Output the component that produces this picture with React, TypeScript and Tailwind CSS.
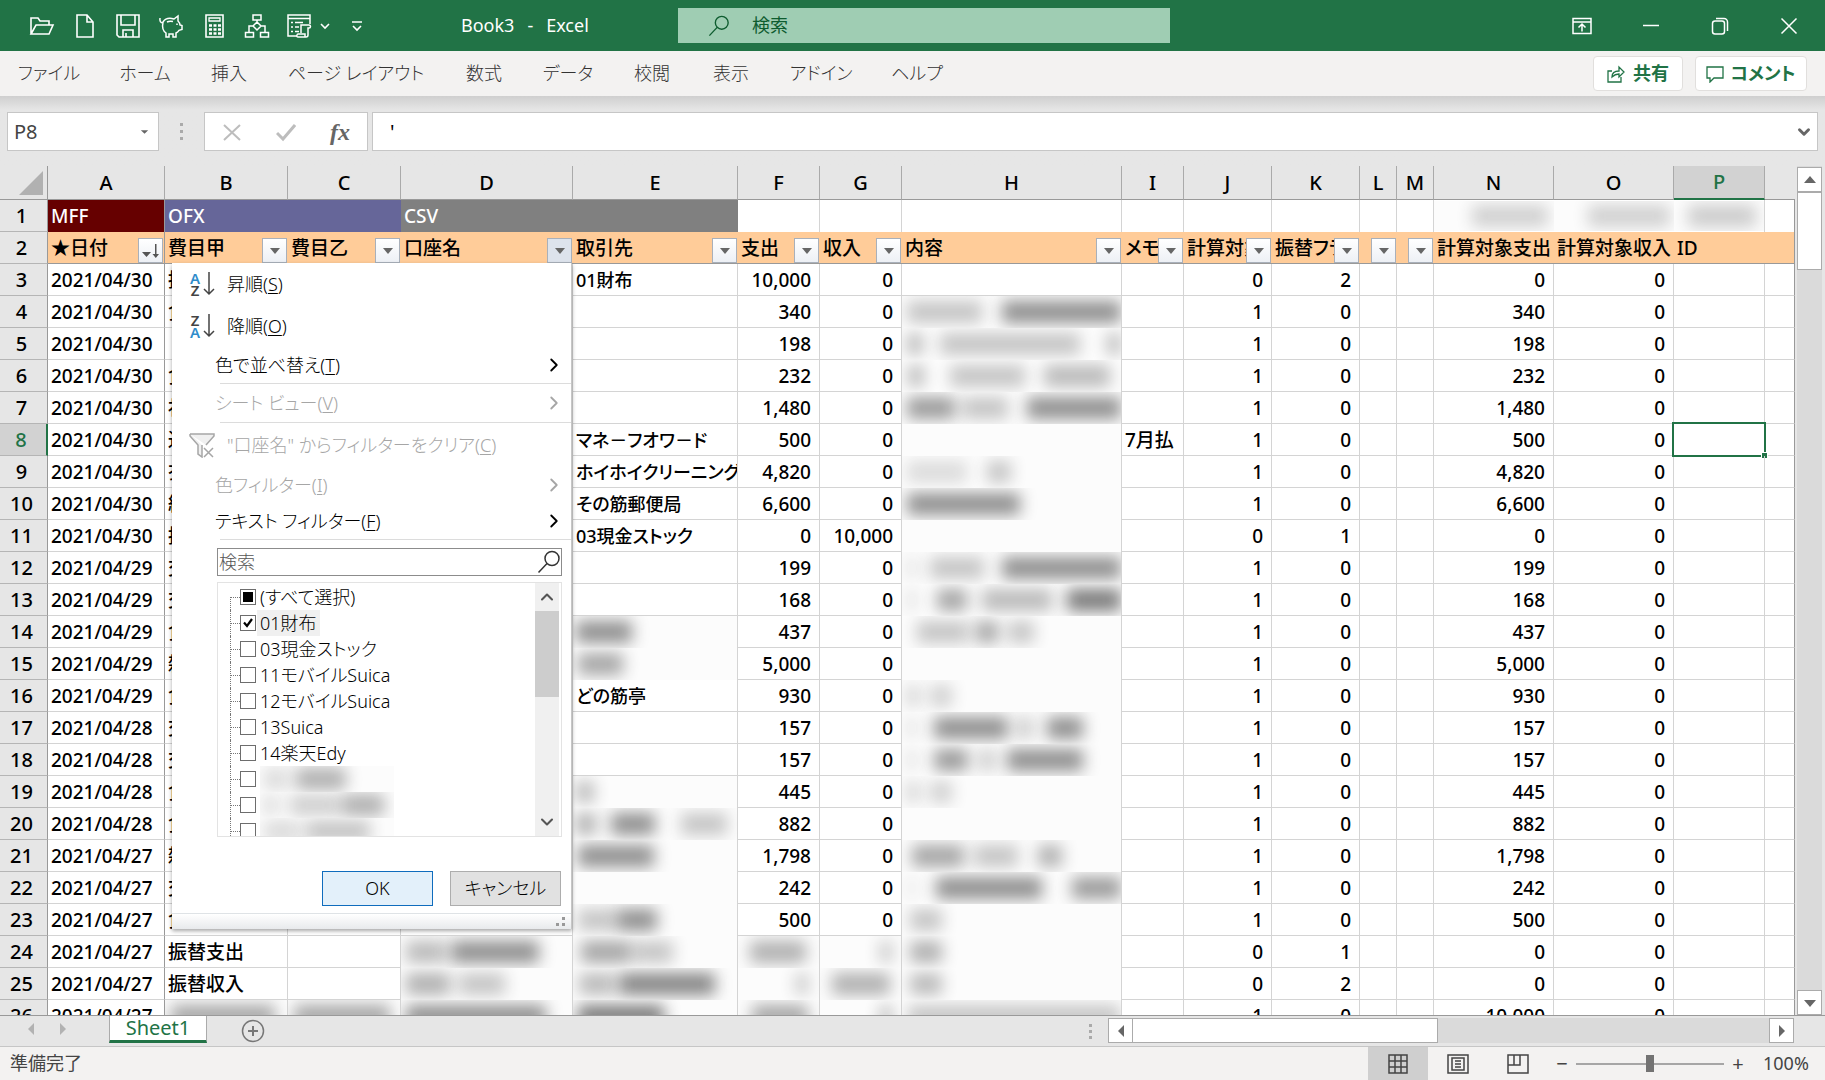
import React from 'react';
import { ChevronDown, ChevronRight, ChevronUp } from 'lucide-react';

type Bar = [start: number, width: number, alpha: number];
type Cell = string | Bar[];

const tabs = [
  { label: 'ファイル', width: 'w-[98px]' },
  { label: 'ホーム', width: 'w-[94px]' },
  { label: '挿入', width: 'w-[74px]' },
  { label: 'ページ レイアウト', width: 'w-[180px]' },
  { label: '数式', width: 'w-[76px]' },
  { label: 'データ', width: 'w-[92px]' },
  { label: '校閲', width: 'w-[76px]' },
  { label: '表示', width: 'w-[82px]' },
  { label: 'アドイン', width: 'w-[98px]' },
  { label: 'ヘルプ', width: 'w-[94px]' },
];

const columns = [
  { id: 'A', width: 'w-[117px]', title: '★日付', filter: true },
  { id: 'B', width: 'w-[123px]', title: '費目甲', filter: true },
  { id: 'C', width: 'w-[113px]', title: '費目乙', filter: true },
  { id: 'D', width: 'w-[172px]', title: '口座名', filter: true },
  { id: 'E', width: 'w-[165px]', title: '取引先', filter: true },
  { id: 'F', width: 'w-[82px]', title: '支出', filter: true },
  { id: 'G', width: 'w-[82px]', title: '収入', filter: true },
  { id: 'H', width: 'w-[220px]', title: '内容', filter: true },
  { id: 'I', width: 'w-[62px]', title: 'メモ', filter: true },
  { id: 'J', width: 'w-[88px]', title: '計算対象', filter: true },
  { id: 'K', width: 'w-[88px]', title: '振替フラグ', filter: true },
  { id: 'L', width: 'w-[37px]', title: '', filter: true },
  { id: 'M', width: 'w-[37px]', title: '', filter: true },
  { id: 'N', width: 'w-[120px]', title: '計算対象支出', filter: false },
  { id: 'O', width: 'w-[120px]', title: '計算対象収入', filter: false },
  { id: 'P', width: 'w-[91px]', title: 'ID', filter: false },
];

// date, B, C, D, E, F, G, H, I, J, K, N, O
const rows: Cell[][] = [
  ['2021/04/30', '振替収入', '', '', '01財布', '10,000', '0', '', '', '0', '2', '0', '0'],
  ['2021/04/30', '食費', '', '', '', '340', '0', [[5, 75, 0.25], [100, 119, 0.5]], '', '1', '0', '340', '0'],
  ['2021/04/30', '', '', '', '', '198', '0', [[5, 16, 0.3], [38, 140, 0.25], [205, 14, 0.3]], '', '1', '0', '198', '0'],
  ['2021/04/30', '食費', '', '', '', '232', '0', [[6, 16, 0.3], [48, 75, 0.25], [142, 66, 0.3]], '', '1', '0', '232', '0'],
  ['2021/04/30', '社会費', '', '', '', '1,480', '0', [[5, 48, 0.45], [60, 46, 0.25], [125, 94, 0.5]], '', '1', '0', '1,480', '0'],
  ['2021/04/30', '通信費', '', '', 'マネ－フオワ－ド', '500', '0', [], '7月払', '1', '0', '500', '0'],
  ['2021/04/30', '衣服費', '', '', 'ホイホイクリーニング', '4,820', '0', [[5, 60, 0.15], [85, 24, 0.25]], '', '1', '0', '4,820', '0'],
  ['2021/04/30', '経費', '', '', 'その筋郵便局', '6,600', '0', [[5, 113, 0.5]], '', '1', '0', '6,600', '0'],
  ['2021/04/30', '振替支出', '', '', '03現金ストック', '0', '10,000', [], '', '0', '1', '0', '0'],
  ['2021/04/29', '交通費', '', '', '', '199', '0', [[6, 8, 0.15], [28, 54, 0.25], [100, 119, 0.5]], '', '1', '0', '199', '0'],
  ['2021/04/29', '交通費', '', '', '', '168', '0', [[6, 8, 0.15], [35, 30, 0.4], [80, 70, 0.3], [165, 54, 0.6]], '', '1', '0', '168', '0'],
  ['2021/04/29', '食費', '', '', [[3, 56, 0.5]], '437', '0', [[15, 52, 0.25], [74, 22, 0.4], [106, 26, 0.25]], '', '1', '0', '437', '0'],
  ['2021/04/29', '雑費', '', '', [[5, 45, 0.4]], '5,000', '0', [], '', '1', '0', '5,000', '0'],
  ['2021/04/29', '食費', '', '', 'どの筋亭', '930', '0', [[5, 12, 0.2], [28, 22, 0.2]], '', '1', '0', '930', '0'],
  ['2021/04/28', '交通費', '', '', '', '157', '0', [[6, 8, 0.15], [32, 74, 0.5], [116, 14, 0.25], [145, 36, 0.5]], '', '1', '0', '157', '0'],
  ['2021/04/28', '交通費', '', '', '', '157', '0', [[6, 8, 0.15], [32, 34, 0.45], [78, 14, 0.25], [105, 76, 0.5]], '', '1', '0', '157', '0'],
  ['2021/04/28', '食費', '', '', [[3, 18, 0.3]], '445', '0', [[5, 12, 0.2], [28, 22, 0.2]], '', '1', '0', '445', '0'],
  ['2021/04/28', '食費', '', '', [[3, 20, 0.35], [38, 44, 0.5], [108, 46, 0.25]], '882', '0', [], '', '1', '0', '882', '0'],
  ['2021/04/27', '雑費', '', '', [[5, 76, 0.5]], '1,798', '0', [[10, 52, 0.4], [72, 44, 0.25], [136, 24, 0.35]], '', '1', '0', '1,798', '0'],
  ['2021/04/27', '交通費', '', '', [], '242', '0', [[6, 8, 0.1], [34, 106, 0.5], [170, 49, 0.45]], '', '1', '0', '242', '0'],
  ['2021/04/27', '食費', '', '', [[5, 38, 0.25], [44, 40, 0.5]], '500', '0', [[8, 32, 0.25]], '', '1', '0', '500', '0'],
  ['2021/04/27', '振替支出', '', [[5, 40, 0.3], [50, 88, 0.5]], [[8, 50, 0.4], [60, 40, 0.25]], [[12, 56, 0.35]], [[60, 12, 0.25]], [[8, 32, 0.35]], '', '0', '1', '0', '0'],
  ['2021/04/27', '振替収入', '', [[5, 44, 0.35], [58, 46, 0.25]], [[6, 36, 0.3], [46, 96, 0.55]], [[58, 12, 0.25]], [[12, 58, 0.35]], [[8, 32, 0.3]], '', '0', '2', '0', '0'],
  ['2021/04/27', [[6, 104, 0.4]], [[6, 96, 0.4]], [[5, 140, 0.5]], [[5, 86, 0.6]], [[14, 56, 0.4]], [[60, 12, 0.3]], [[6, 212, 0.25]], '', '1', '0', '10,000', '0'],
];

const accounts = [
  { label: '(すべて選択)', state: 'mixed' },
  { label: '01財布', state: 'on' },
  { label: '03現金ストック', state: 'off' },
  { label: '11モバイルSuica', state: 'off' },
  { label: '12モバイルSuica', state: 'off' },
  { label: '13Suica', state: 'off' },
  { label: '14楽天Edy', state: 'off' },
];

const hiddenAccounts: Bar[][] = [
  [[4, 24, 0.15], [36, 50, 0.35]],
  [[4, 14, 0.15], [30, 50, 0.2], [82, 42, 0.35]],
  [[4, 36, 0.15], [46, 64, 0.25]],
];

const Smudge: React.FC<{ bars: Bar[] }> = ({ bars }) => (
  <span className="flex h-full w-full items-center overflow-hidden bg-[#fcfcfc]">
    {bars.map(([start, width, alpha], i) => {
      const before = i === 0 ? 0 : bars[i - 1][0] + bars[i - 1][1];
      return (
        <span
          key={start}
          className="h-[22px] shrink-0 bg-neutral-800 blur-[8px]"
          style={{ marginLeft: start - before, width, opacity: alpha }}
        />
      );
    })}
  </span>
);

const OpenIcon = () => (
  <svg className="h-[26px] w-[26px]" viewBox="0 0 26 26" fill="none" stroke="currentColor" strokeWidth="1.6">
    <path d="M2 21V5h7l2 3h9v4M2 21l5-9h17l-4 9z" />
  </svg>
);

const NewIcon = () => (
  <svg className="h-[26px] w-[26px]" viewBox="0 0 26 26" fill="none" stroke="currentColor" strokeWidth="1.6">
    <path d="M5 2h10l6 7v15H5zM15 2v7h6" />
  </svg>
);

const SaveIcon = () => (
  <svg className="h-[26px] w-[26px]" viewBox="0 0 26 26" fill="none" stroke="currentColor" strokeWidth="1.6">
    <path d="M2 2h22v22H4l-2-2zM6 2v10h14V2M8 24v-7h10v7M11 24v-4" />
  </svg>
);

const PigIcon = () => (
  <svg className="h-[26px] w-[26px]" viewBox="0 0 26 26" fill="none" stroke="currentColor" strokeWidth="1.5">
    <path d="M5 9c2-3 6-4.500 11-3l4-3v5c1 1 2 2 2 4l2 .5v4l-3 .8c-1 1.500-2 2.200-3 2.700V24h-3v-3h-4v3H8v-4c-3-2-4-6-3-11zM5 10C2.500 10 1.500 8 2 5M9 9c2-1 4-1 6-.5" />
    <path d="M19 10.500v1.500" />
  </svg>
);

const CalcIcon = () => (
  <svg className="h-[26px] w-[26px]" viewBox="0 0 26 26" fill="none" stroke="currentColor" strokeWidth="1.6">
    <path d="M5 2h17v22H5z" />
    <path d="M8 5h11v3H8z" strokeWidth="1.300" />
    <path d="M8 12.500h3m1.500 0h3m1.500 0h3M8 16.500h3m1.500 0h3m1.500 0h3M8 20.500h3m1.500 0h3m1.500 0h3" strokeWidth="2.600" />
  </svg>
);

const TreeIcon = () => (
  <svg className="h-[26px] w-[26px]" viewBox="0 0 26 26" fill="none" stroke="currentColor" strokeWidth="1.5">
    <path d="M9 2h8v5H9zM13 7v2M13 9l4 4-4 4-4-4zM9 13H5v6M17 13h4v6M1.500 19.500h8V24h-8zM16.500 19.500h8V24h-8z" />
  </svg>
);

const FormIcon = () => (
  <svg className="h-[26px] w-[26px]" viewBox="0 0 26 26" fill="none" stroke="currentColor" strokeWidth="1.5">
    <path d="M11 23H2V2h22v9M2 5.500h22M5 9.500h2m2 0h8M5 14h2m2 0h4M5 18.500h2m2 0h4" />
    <path d="M15 20v-8h8c2 0 2 3 0 3h-1v7c0 2-2 2-2 2h-8c-2 0-1-3 0-3h7v3" />
  </svg>
);

const SearchIcon: React.FC<{ className: string }> = ({ className }) => (
  <svg className={className} viewBox="0 0 24 24" fill="none" stroke="currentColor" strokeWidth="1.500">
    <circle cx="15" cy="8.500" r="7" />
    <path d="M10 13.500L1.500 22.500" />
  </svg>
);

const SortIcon: React.FC<{ top: string; bottom: string; flip?: boolean }> = ({ top, bottom, flip }) => (
  <span className="flex w-[26px] items-center">
    <span className="flex w-3 flex-col text-center text-[15px] leading-3 font-semibold">
      <span className={flip ? 'text-[#444]' : 'text-[#2f8ccb]'}>{top}</span>
      <span className={flip ? 'text-[#2f8ccb]' : 'text-[#444]'}>{bottom}</span>
    </span>
    <svg className="h-6 w-[14px]" viewBox="0 0 14 24" fill="none" stroke="#444" strokeWidth="1.500">
      <path d="M8 0v22M3 17l5 5 5-5" />
    </svg>
  </span>
);

const ClearFilterIcon = () => (
  <svg className="h-[26px] w-[26px]" viewBox="0 0 26 26" fill="none" stroke="#a6a6a6" strokeWidth="1.500">
    <path d="M1 2h24v2l-8 9M1 2v2l8 9v9l4 3V13" fill="#f0f0f0" />
    <path d="M15 16l9 9M24 16l-9 9" />
  </svg>
);

const Triangle: React.FC<{ d: string }> = ({ d }) => (
  <svg className="h-3 w-3" viewBox="0 0 12 12" fill="#666">
    <path d={d} />
  </svg>
);

const quickTools = [
  { label: '開く', Icon: OpenIcon },
  { label: '新規作成', Icon: NewIcon },
  { label: '上書き保存', Icon: SaveIcon },
  { label: '貯金箱', Icon: PigIcon },
  { label: '電卓', Icon: CalcIcon },
  { label: '階層', Icon: TreeIcon },
];

const TitleBar = () => (
  <header className="flex h-[51px] shrink-0 items-center bg-[#217346] text-white">
    <div className="flex w-[441px] items-center pl-5">
      {quickTools.map(({ label, Icon }) => (
        <button key={label} type="button" aria-label={label} className="flex w-[43px] justify-center">
          <Icon />
        </button>
      ))}
      <button type="button" aria-label="フォーム" className="ml-2 flex items-center gap-2">
        <FormIcon />
        <svg className="h-2 w-[10px]" viewBox="0 0 10 8" fill="none" stroke="currentColor" strokeWidth="1.600">
          <path d="M1 2l4 4 4-4" />
        </svg>
      </button>
      <button type="button" aria-label="クイック アクセス ツール バーのカスタマイズ" className="ml-[21px]">
        <svg className="h-3 w-3" viewBox="0 0 12 12" fill="none" stroke="currentColor" strokeWidth="1.600">
          <path d="M1 2h10M2 6l4 4 4-4" />
        </svg>
      </button>
    </div>
    <h1 className="flex w-[237px] gap-[13px] pl-5 text-[18px]">
      <span>Book3</span>
      <span>-</span>
      <span>Excel</span>
    </h1>
    <label className="flex h-[35px] w-[492px] items-center bg-[#9fcdb3] pl-[30px] text-[#0e5c2f]">
      <SearchIcon className="h-[22px] w-[22px]" />
      <input
        aria-label="検索"
        placeholder="検索"
        className="ml-[22px] flex-1 bg-transparent text-[18px] outline-none placeholder:text-[#0e5c2f]"
      />
    </label>
    <div className="mr-[2px] ml-auto flex">
      <button type="button" aria-label="リボンの表示オプション" className="flex w-[69px] justify-center">
        <svg className="h-5 w-5" viewBox="0 0 20 20" fill="none" stroke="currentColor" strokeWidth="1.500">
          <path d="M1 2.500h18v15H1zM1 6h18M10 15.500V8M6.500 11.500L10 8l3.500 3.500" />
        </svg>
      </button>
      <button type="button" aria-label="最小化" className="flex w-[69px] justify-center">
        <svg className="h-5 w-5" viewBox="0 0 20 20" stroke="currentColor" strokeWidth="1.500">
          <path d="M2 9.500h16" />
        </svg>
      </button>
      <button type="button" aria-label="元に戻す" className="flex w-[69px] justify-center">
        <svg className="h-5 w-5" viewBox="0 0 20 20" fill="none" stroke="currentColor" strokeWidth="1.500">
          <rect x="2.500" y="5" width="12" height="13" rx="2.500" />
          <path d="M6 2.500h8a3.500 3.500 0 0 1 3.500 3.500v9" />
        </svg>
      </button>
      <button type="button" aria-label="閉じる" className="flex w-[69px] justify-center">
        <svg className="h-5 w-5" viewBox="0 0 20 20" stroke="currentColor" strokeWidth="1.500">
          <path d="M2.500 2.500l15 15M17.500 2.500l-15 15" />
        </svg>
      </button>
    </div>
  </header>
);

const Ribbon = () => (
  <nav className="flex h-[45px] shrink-0 items-center bg-[#f3f2f1] text-[18px] text-[#333]">
    {tabs.map((tab) => (
      <button key={tab.label} type="button" className={`${tab.width} text-center font-light whitespace-nowrap`}>
        {tab.label}
      </button>
    ))}
    <div className="mr-[18px] ml-auto flex gap-3 font-bold text-[#217346]">
      <button type="button" className="flex h-[35px] w-[90px] items-center justify-center gap-2 rounded border border-[#e1dfdd] bg-white">
        <svg className="h-[18px] w-[18px]" viewBox="0 0 18 18" fill="none" stroke="currentColor" strokeWidth="1.300">
          <path d="M5 6H1v11h13v-5M5 12c0-4 3-6 7-6V2l5 5-5 5V9c-3 0-5 1-7 3z" />
        </svg>
        共有
      </button>
      <button type="button" className="flex h-[35px] w-[112px] items-center justify-center gap-[6px] rounded border border-[#e1dfdd] bg-white">
        <svg className="h-[18px] w-[18px]" viewBox="0 0 18 18" fill="none" stroke="currentColor" strokeWidth="1.300">
          <path d="M1 2h16v11H8l-4 4v-4H1z" />
        </svg>
        コメント
      </button>
    </div>
  </nav>
);

const FormulaBar = () => (
  <div className="flex h-[70px] shrink-0 items-start bg-gradient-to-b from-[#cfcfcf] via-[#e6e6e6] via-20% to-[#e6e6e6] pt-4 pr-[7px] pl-[7px]">
    <div className="flex h-[39px] w-[152px] items-center border border-[#c6c6c6] bg-white pr-2 pl-[6px]">
      <input aria-label="名前ボックス" defaultValue="P8" className="w-full bg-transparent text-[20px] text-[#444] outline-none" />
      <Triangle d="M2 4h8l-4 4z" />
    </div>
    <div className="flex h-[39px] w-[45px] flex-col items-center justify-center gap-1">
      <span className="h-[3px] w-[3px] bg-[#aaa]" />
      <span className="h-[3px] w-[3px] bg-[#aaa]" />
      <span className="h-[3px] w-[3px] bg-[#aaa]" />
    </div>
    <div className="flex h-[39px] w-[164px] items-center justify-between border border-[#c6c6c6] bg-white px-[17px]">
      <button type="button" aria-label="キャンセル">
        <svg className="h-5 w-5" viewBox="0 0 20 20" stroke="#bdbdbd" strokeWidth="2">
          <path d="M2 3l16 15M18 3L2 18" />
        </svg>
      </button>
      <button type="button" aria-label="入力">
        <svg className="h-5 w-5" viewBox="0 0 20 20" fill="none" stroke="#bdbdbd" strokeWidth="3">
          <path d="M1 11l6 6L19 3" />
        </svg>
      </button>
      <button type="button" aria-label="関数の挿入" className="font-['Liberation_Serif',serif] text-[24px] leading-6 font-bold text-[#666] italic">
        fx
      </button>
    </div>
    <div className="ml-1 flex h-[39px] flex-1 items-center border border-[#c6c6c6] bg-white pr-1 pl-[17px]">
      <input aria-label="数式バー" defaultValue="'" className="flex-1 bg-transparent text-[20px] outline-none" />
      <ChevronDown className="h-[18px] w-[18px] text-[#666]" strokeWidth={4} />
    </div>
  </div>
);

const FilterButton: React.FC<{ column: string }> = ({ column }) => (
  <button
    type="button"
    aria-label={`${column}列のフィルター`}
    className={`mr-px flex h-[25px] w-[25px] shrink-0 items-center justify-center self-end border border-[#a9b0ba] ${
      column === 'D' ? 'bg-[#dde3ec]' : 'bg-gradient-to-b from-white to-[#edf0f5]'
    }`}
  >
    {column === 'A' ? (
      <svg className="h-4 w-5" viewBox="0 0 20 16" fill="#555">
        <path d="M1 9h9l-4.500 5zM14 1h1.500v10H18l-3.200 4-3.300-4H14z" />
      </svg>
    ) : (
      <Triangle d="M1 3h10l-5 6z" />
    )}
  </button>
);

const DataCell: React.FC<{ value: Cell; right?: boolean; frozen?: boolean; small?: boolean }> = ({
  value,
  right,
  frozen,
  small,
}) => {
  if (typeof value !== 'string') {
    return (
      <td className="h-8 border-r border-[#d4d4d4] p-0">
        <div className="h-8">
          <Smudge bars={value} />
        </div>
      </td>
    );
  }
  return (
    <td
      className={`h-8 overflow-hidden border-r border-b border-b-[#d4d4d4] p-0 whitespace-nowrap ${
        frozen ? 'border-r-[#999]' : 'border-r-[#d4d4d4]'
      } ${right ? 'pr-2 text-right' : 'pl-[3px]'} ${small ? 'text-[18px]' : ''}`}
    >
      {value}
    </td>
  );
};

const RowHead: React.FC<{ n: number }> = ({ n }) => (
  <th
    scope="row"
    className={`h-8 border-b border-b-[#b5b5b5] p-0 pr-1 text-[20px] font-medium ${
      n === 8 ? 'border-r-2 border-r-[#217346] bg-[#d2d2d2] text-[#217346]' : 'border-r border-r-[#999] bg-[#e6e6e6]'
    }`}
  >
    {n}
  </th>
);

const Sheet = () => (
  <table className="w-full table-fixed border-separate border-spacing-0 bg-white text-[19px] leading-[30px] font-medium text-black">
    <colgroup>
      <col className="w-12" />
      {columns.map((c) => (
        <col key={c.id} className={c.width} />
      ))}
      <col />
    </colgroup>
    <thead>
      <tr className="bg-[#e6e6e6]">
        <th className="h-[34px] border-r border-b border-[#999] p-0 pr-1 pb-1 align-bottom" aria-label="すべて選択">
          <svg className="ml-auto h-6 w-6" viewBox="0 0 24 24" fill="#b1b1b1">
            <path d="M24 0v24H0z" />
          </svg>
        </th>
        {columns.map((c) => (
          <th
            key={c.id}
            scope="col"
            className={`h-[34px] border-r border-r-[#aaa] p-0 text-[20px] font-medium ${
              c.id === 'P' ? 'border-b-2 border-b-[#217346] bg-[#d2d2d2] text-[#217346]' : 'border-b border-b-[#999]'
            }`}
          >
            {c.id}
          </th>
        ))}
        <th className="border-b border-[#999]" />
      </tr>
    </thead>
    <tbody>
      <tr>
        <RowHead n={1} />
        <td className="h-8 border-r border-[#999] bg-[#660000] p-0 pl-[3px] text-white">MFF</td>
        <td colSpan={2} className="h-8 bg-[#666699] p-0 pl-[3px] text-white">OFX</td>
        <td colSpan={2} className="h-8 bg-[#808080] p-0 pl-[3px] text-white">CSV</td>
        {columns.slice(5, 13).map((c) => (
          <td key={c.id} className="h-8 border-r border-[#d4d4d4] p-0" />
        ))}
        <td className="h-8 p-0"><div className="h-[30px]"><Smudge bars={[[38, 76, 0.2]]} /></div></td>
        <td className="h-8 p-0"><div className="h-[30px]"><Smudge bars={[[34, 82, 0.2]]} /></div></td>
        <td className="h-8 border-r border-[#d4d4d4] p-0"><div className="h-[30px]"><Smudge bars={[[14, 68, 0.22]]} /></div></td>
        <td className="border-r border-[#999]" />
      </tr>
      <tr className="bg-[#ffcc99]">
        <RowHead n={2} />
        {columns.map((c) => (
          <td
            key={c.id}
            className={`h-8 border-b border-b-[#999] p-0 ${c.id === 'A' ? 'border-r border-r-[#999]' : ''}`}
          >
            <div className="flex h-[31px] overflow-hidden pl-[3px]">
              <span className="flex-1 overflow-hidden leading-8 whitespace-nowrap">{c.title}</span>
              {c.filter && <FilterButton column={c.id} />}
            </div>
          </td>
        ))}
        <td className="border-r border-b border-[#999]" />
      </tr>
      {rows.map((row, i) => (
        <tr key={i}>
          <RowHead n={i + 3} />
          <DataCell value={row[0]} frozen />
          <DataCell value={row[1]} />
          <DataCell value={row[2]} />
          <DataCell value={row[3]} />
          <DataCell value={row[4]} small />
          <DataCell value={row[5]} right />
          <DataCell value={row[6]} right />
          <DataCell value={row[7]} />
          <DataCell value={row[8]} />
          <DataCell value={row[9]} right />
          <DataCell value={row[10]} right />
          <DataCell value="" />
          <DataCell value="" />
          <DataCell value={row[11]} right />
          <DataCell value={row[12]} right />
          <td className="relative h-8 border-r border-b border-[#d4d4d4] p-0">
            {i + 3 === 8 && (
              <>
                <span className="absolute -inset-[2px] border-2 border-[#217346]" />
                <span className="absolute -right-1 -bottom-1 h-[7px] w-[7px] border border-white bg-[#217346]" />
              </>
            )}
          </td>
          <td className="border-r border-b border-r-[#999] border-b-[#d4d4d4]" />
        </tr>
      ))}
    </tbody>
  </table>
);

const MenuItem: React.FC<{
  label: string;
  accel: string;
  height: string;
  icon?: React.ReactNode;
  disabled?: boolean;
  arrow?: boolean;
}> = ({ label, accel, height, icon, disabled, arrow }) => (
  <button
    type="button"
    role="menuitem"
    disabled={disabled}
    className={`flex w-full items-center pr-[6px] whitespace-nowrap ${height} ${icon ? 'pl-[17px]' : 'pl-[43px]'} ${
      disabled ? 'text-[#a6a6a6]' : 'text-black'
    }`}
  >
    {icon && <span className="mr-3 w-[26px]">{icon}</span>}
    <span>
      {label}(<u className="underline-offset-2">{accel}</u>)
    </span>
    {arrow && <ChevronRight className="ml-auto h-[22px] w-[22px]" strokeWidth={2} />}
  </button>
);

const Separator = () => <hr className="ml-12 border-[#dcdcdc]" />;

const FilterMenu = () => (
  <div
    role="menu"
    className="absolute top-[97px] left-[172px] w-[400px] border-r border-[#c6c6c6] bg-white text-[18px] font-light shadow-[0_2px_4px_rgba(0,0,0,0.35)]"
  >
    <MenuItem label="昇順" accel="S" height="h-[42px]" icon={<SortIcon top="A" bottom="Z" />} />
    <MenuItem label="降順" accel="O" height="h-[42px]" icon={<SortIcon top="Z" bottom="A" flip />} />
    <MenuItem label="色で並べ替え" accel="T" height="h-[36px]" arrow />
    <Separator />
    <MenuItem label="シート ビュー" accel="V" height="h-[38px]" disabled arrow />
    <Separator />
    <MenuItem label={'"口座名" からフィルターをクリア'} accel="C" height="h-[44px]" icon={<ClearFilterIcon />} disabled />
    <MenuItem label="色フィルター" accel="I" height="h-[36px]" disabled arrow />
    <MenuItem label="テキスト フィルター" accel="F" height="h-[36px]" arrow />
    <Separator />

    <div className="mr-[9px] ml-[45px]">
      <label className="mt-2 flex h-7 items-center border border-[#8c8c8c] pl-px">
        <input aria-label="検索" placeholder="検索" className="min-w-0 flex-1 outline-none placeholder:text-[#555]" />
        <SearchIcon className="h-6 w-6 text-[#333]" />
      </label>
      <div className="mt-[6px] flex h-[255px] overflow-hidden border border-[#e3e3e3]">
        <ul className="flex-1 pt-[1px] pl-3">
          {accounts.map(({ label, state }, i) => (
            <li key={label} className="flex h-[26px] items-center">
              <span className={`w-[10px] border-l border-dotted border-[#777] ${i === 0 ? 'h-[13px] self-end' : 'h-[26px]'}`}>
                <span className={`block border-b border-dotted border-[#777] ${i === 0 ? 'h-px' : 'h-[14px]'}`} />
              </span>
              <label className="flex items-center">
                <input
                  type="checkbox"
                  defaultChecked={state === 'on'}
                  className="h-4 w-4 appearance-none border border-[#6d6d6d] bg-white"
                />
                {state === 'on' && (
                  <svg className="-ml-[14px] h-3 w-3" viewBox="0 0 12 12" fill="none" stroke="#000" strokeWidth="2.200">
                    <path d="M2 5.500l3 3.500 5-7" />
                  </svg>
                )}
                {state === 'mixed' && <span className="mr-[3px] -ml-[13px] h-[10px] w-[10px] bg-black" />}
                <span
                  className={`px-[3px] leading-[26px] text-black ${state === 'on' ? 'ml-[3px] bg-[#f0f0f0]' : 'ml-[1px]'}`}
                >
                  {label}
                </span>
              </label>
            </li>
          ))}
          {hiddenAccounts.map((bars, i) => (
            <li key={i} className="flex h-[26px] items-center">
              <span className="h-[26px] w-[10px] border-l border-dotted border-[#777]">
                <span className="block h-[14px] border-b border-dotted border-[#777]" />
              </span>
              <input
                type="checkbox"
                aria-label={`口座 ${i + 8}`}
                className="h-4 w-4 appearance-none border border-[#6d6d6d] bg-white"
              />
              <span className="ml-1 h-[26px] w-[134px]">
                <Smudge bars={bars} />
              </span>
            </li>
          ))}
        </ul>
        <div className="mr-[2px] flex w-6 flex-col items-center justify-between bg-[#f0f0f0] text-[#555]">
          <ChevronUp className="my-1 h-5 w-5" strokeWidth={2.5} />
          <span className="mb-auto h-[86px] w-full bg-[#cdcdcd]" />
          <ChevronDown className="my-1 h-5 w-5" strokeWidth={2.5} />
        </div>
      </div>
      <div className="mt-[34px] mr-px mb-[7px] flex justify-end gap-[17px] text-black">
        <button type="button" className="h-[35px] w-[111px] border border-[#0f6cbd] bg-[#e3f0fa]">OK</button>
        <button type="button" className="h-[35px] w-[111px] border border-[#adadad] bg-[#e1e1e1]">キャンセル</button>
      </div>
    </div>
    <div className="flex h-4 items-end justify-end border-t border-[#dfe3e6] bg-gradient-to-b from-white to-[#e8eaec] pr-[5px] pb-[2px]">
      <svg className="h-[10px] w-[10px]" viewBox="0 0 10 10" fill="#999">
        <path d="M6 0h3v3H6zM0 6h3v3H0zM6 6h3v3H6z" />
      </svg>
    </div>
  </div>
);

const VerticalScroll = () => (
  <div className="mr-[3px] ml-[2px] flex w-[25px] flex-col bg-[#dadada] pt-[1px]">
    <button type="button" aria-label="上へ" className="flex h-[25px] items-center justify-center border border-[#ababab] bg-white">
      <Triangle d="M0 9h12L6 2z" />
    </button>
    <div className="h-[78px] border border-[#ababab] bg-white" />
    <button type="button" aria-label="下へ" className="mt-auto flex h-[25px] items-center justify-center border border-[#ababab] bg-white">
      <Triangle d="M0 3h12l-6 7z" />
    </button>
  </div>
);

const SheetBar = () => (
  <div className="flex h-[31px] shrink-0 border-b border-[#c6c6c6] bg-[#e6e6e6]">
    <div className="flex w-[109px] items-center justify-center gap-5 pr-4 pb-1 opacity-40">
      <Triangle d="M9 0v12L3 6z" />
      <Triangle d="M3 0v12l6-6z" />
    </div>
    <button type="button" className="h-[27px] w-[98px] border-x border-b-3 border-x-[#ababab] border-b-[#217346] bg-white text-[20px] leading-6 text-[#217346]">
      Sheet1
    </button>
    <button type="button" aria-label="新しいシート" className="ml-[34px]">
      <svg className="h-6 w-6" viewBox="0 0 24 24" fill="none" stroke="#777" strokeWidth="1.500">
        <circle cx="12" cy="12" r="10.500" />
        <path d="M12 7v10M7 12h10" strokeWidth="2" />
      </svg>
    </button>
    <div className="mr-[31px] ml-auto flex">
      <div className="flex w-9 flex-col items-center justify-center gap-[3px]">
        <span className="h-[3px] w-[3px] bg-[#aaa]" />
        <span className="h-[3px] w-[3px] bg-[#aaa]" />
        <span className="h-[3px] w-[3px] bg-[#aaa]" />
      </div>
      <div className="mt-[2px] flex h-[25px] w-[686px] bg-[#dadada]">
        <button type="button" aria-label="左へ" className="flex w-[25px] items-center justify-center border border-[#ababab] bg-white">
          <Triangle d="M9 0v12L3 6z" />
        </button>
        <div className="w-[305px] border border-l-0 border-[#ababab] bg-white" />
        <button type="button" aria-label="右へ" className="ml-auto flex w-[25px] items-center justify-center border border-[#ababab] bg-white">
          <Triangle d="M3 0v12l6-6z" />
        </button>
      </div>
    </div>
  </div>
);

const StatusBar = () => (
  <footer className="flex h-[33px] shrink-0 items-center bg-[#f3f2f1] text-[18px] text-[#444]">
    <span className="ml-[10px]">準備完了</span>
    <div className="ml-auto flex h-full">
      <button type="button" aria-label="標準" className="flex w-[60px] items-center justify-center bg-[#cfcfcf]">
        <svg className="h-5 w-5" viewBox="0 0 20 20" fill="none" stroke="#444" strokeWidth="1.500">
          <path d="M1 1h18v18H1zM1 7h18M1 13h18M7 1v18M13 1v18" />
        </svg>
      </button>
      <button type="button" aria-label="ページ レイアウト" className="flex w-[60px] items-center justify-center">
        <svg className="h-5 w-[22px]" viewBox="0 0 22 20" fill="none" stroke="#444" strokeWidth="1.500">
          <path d="M1 1h20v18H1zM5 4h12v12H5zM8 7h6M8 10h6M8 13h6" />
        </svg>
      </button>
      <button type="button" aria-label="改ページ プレビュー" className="flex w-[60px] items-center justify-center">
        <svg className="h-5 w-[22px]" viewBox="0 0 22 20" fill="none" stroke="#444" strokeWidth="1.500">
          <path d="M1 1h20v18H1zM1 11h12V1M7 1v10" />
        </svg>
      </button>
    </div>
    <div className="flex items-center">
      <button type="button" aria-label="縮小" className="w-7 text-center text-[20px] leading-5">−</button>
      <input
        type="range"
        aria-label="ズーム"
        defaultValue={50}
        className="h-[17px] w-[148px] appearance-none bg-transparent bg-[linear-gradient(#a6a6a6,#a6a6a6)] bg-[length:100%_2px] bg-center bg-no-repeat [&::-webkit-slider-thumb]:h-[17px] [&::-webkit-slider-thumb]:w-2 [&::-webkit-slider-thumb]:appearance-none [&::-webkit-slider-thumb]:bg-[#737373]"
      />
      <button type="button" aria-label="拡大" className="w-7 text-center text-[20px] leading-5">+</button>
    </div>
    <span className="w-[73px] pl-[11px]">100%</span>
  </footer>
);

const App: React.FC = () => (
  <div className="flex h-screen flex-col overflow-hidden bg-[#e6e6e6] font-['Noto_Sans','Noto_Sans_CJK_JP',sans-serif] [font-feature-settings:'palt']">
    <TitleBar />
    <Ribbon />
    <FormulaBar />
    <main className="relative flex min-h-0 flex-1 border-b border-[#999]">
      <div className="min-w-0 flex-1 overflow-hidden">
        <Sheet />
      </div>
      <VerticalScroll />
      <FilterMenu />
    </main>
    <SheetBar />
    <StatusBar />
  </div>
);

export default App;
